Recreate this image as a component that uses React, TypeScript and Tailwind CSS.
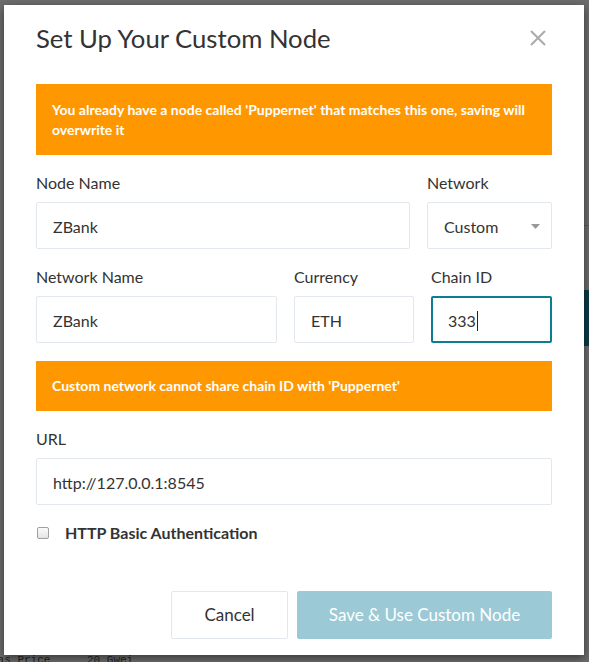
const FONT = { fontFamily: "Lato, 'Open Sans', sans-serif" };

function Field({
  label,
  value,
  className = "",
  focused = false,
}: {
  label: string;
  value: string;
  className?: string;
  focused?: boolean;
}) {
  return (
    <div className={className}>
      <div className="text-[16px] leading-[20px] text-[#333]">{label}</div>
      <div
        className={
          "mt-[9px] flex h-[47px] items-center rounded-[2px] px-4 pt-[2px] text-[16px] text-[#333] " +
          (focused
            ? "border-2 border-[#0e7c93] pl-[15px]"
            : "border border-[#e3e7ee]")
        }
      >
        {value}
        {focused && <span className="ml-px h-[20px] w-px bg-[#222]" />}
      </div>
    </div>
  );
}

function Alert({ children, tall = false }: { children: React.ReactNode; tall?: boolean }) {
  return (
    <div
      className={
        "bg-[#ff9800] px-4 text-[14px] font-bold leading-[20px] text-white " +
        (tall ? "pt-[16px] pb-[15px]" : "py-[15px]")
      }
    >
      {children}
    </div>
  );
}

export default function App() {
  return (
    <div className="relative h-[662px] w-[589px] overflow-hidden bg-[#6d6d6d]" style={FONT}>
      {/* dimmed page behind the overlay */}
      <div className="absolute right-0 top-[225px] h-px w-[5px] bg-[#5a5a5a]" />
      <div className="absolute right-0 top-[290px] h-[56px] w-[5px] bg-[#0b3b47]" />
      <div className="absolute left-[-9px] top-[653px] flex font-mono text-[11px] leading-[14px] text-[#222]">
        <span className="w-[96px]">Gas Price</span>
        <span>20 Gwei</span>
      </div>

      <div className="relative ml-[4px] mt-[5px] flex h-[650px] w-[580px] flex-col bg-white px-8 pb-4 shadow-[0_3px_9px_rgba(0,0,0,0.5)]">
        <div className="mt-[18px] flex h-[30px] items-center justify-between">
          <h2 className="text-[25.7px] leading-[30px] text-[#333]">Set Up Your Custom Node</h2>
          <svg width="16" height="16" viewBox="0 0 16 16" className="mr-[6px]">
            <path d="M1 1L15 15M15 1L1 15" stroke="#aaa" strokeWidth="2" />
          </svg>
        </div>

        <div className="mt-[31px]">
          <Alert tall>
            You already have a node called 'Puppernet' that matches this one, saving will
            overwrite it
          </Alert>
        </div>

        <div className="mt-[18px] flex gap-[17px]">
          <Field label="Node Name" value="ZBank" className="w-[374px]" />
          <div className="w-[125px]">
            <div className="text-[16px] leading-[20px] text-[#333]">Network</div>
            <div className="mt-[9px] flex h-[47px] items-center justify-between rounded-[2px] border border-[#e3e7ee] pl-4 pr-[11px] pt-[2px] text-[16px] text-[#333]">
              Custom
              <svg width="9" height="5" viewBox="0 0 9 5">
                <path d="M0 0H9L4.5 5Z" fill="#999" />
              </svg>
            </div>
          </div>
        </div>

        <div className="mt-[18px] flex gap-[17px]">
          <Field label="Network Name" value="ZBank" className="w-[241px]" />
          <Field label="Currency" value="ETH" className="w-[120px]" />
          <Field label="Chain ID" value="333" className="w-[121px]" focused />
        </div>

        <div className="mt-[18px]">
          <Alert>Custom network cannot share chain ID with 'Puppernet'</Alert>
        </div>

        <Field label="URL" value="http://127.0.0.1:8545" className="mt-[18px]" />

        <label className="mt-[18px] flex h-[20px] items-center">
          <span className="ml-px h-[12px] w-[12px] rounded-[2px] border border-[#a0a0a0] bg-gradient-to-b from-[#fbfbfb] to-[#e4e4e4]" />
          <span className="ml-[16px] text-[16px] font-bold text-[#333]">HTTP Basic Authentication</span>
        </label>

        <div className="mt-auto flex justify-end gap-[9px]">
          <button className="h-[48px] w-[117px] rounded-[2px] border border-[#e3e7ee] bg-white text-[17px] text-[#333]">
            Cancel
          </button>
          <button className="h-[48px] w-[255px] rounded-[2px] bg-[#9bcad6] text-[17px] text-white">
            Save &amp; Use Custom Node
          </button>
        </div>
      </div>
    </div>
  );
}
